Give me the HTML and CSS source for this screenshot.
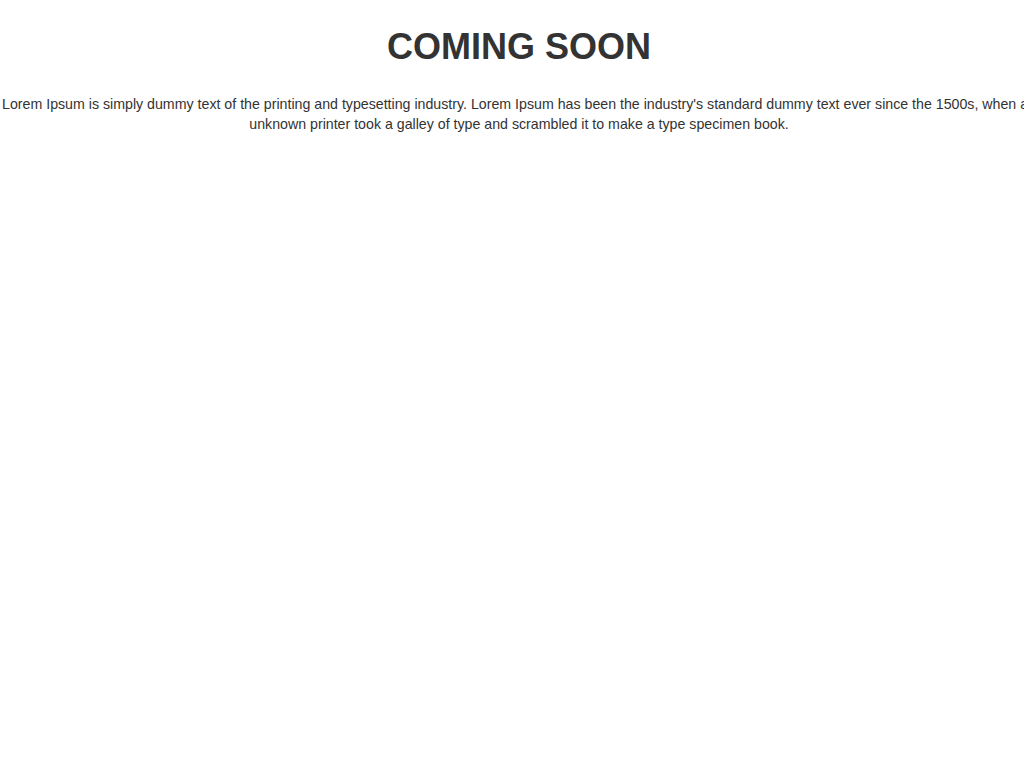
FILE: index.html
```html
<!DOCTYPE html>
<html>
<head>
<meta charset="utf-8">
<title>Coming Soon</title>
<link rel="stylesheet" href="styles.css">
</head>
<body>
<div class="page">
  <h1 class="title">COMING SOON</h1>
  <p class="lead-text">Lorem Ipsum is simply dummy text of the printing and typesetting industry. Lorem Ipsum has been the industry's standard dummy text ever since the 1500s, when an unknown printer took a galley of type and scrambled it to make a type specimen book.</p>
</div>
</body>
</html>
```
FILE: styles.css
```css
html, body {
  margin: 0;
  padding: 0;
  background: #ffffff;
  overflow: hidden;
}
body {
  font-family: "Liberation Sans", Arial, Helvetica, sans-serif;
  color: #333333;
  font-size: 14px;
  line-height: 20px;
}
.page {
  width: 1042px;
  margin-left: -2px;
  text-align: center;
}
.title {
  margin: 0;
  padding-top: 25px;
  font-size: 36px;
  font-weight: bold;
  line-height: 44px;
  color: #333333;
}
.lead-text {
  margin: 25px 0 0;
  font-size: 14.2px;
  line-height: 20px;
}
```
